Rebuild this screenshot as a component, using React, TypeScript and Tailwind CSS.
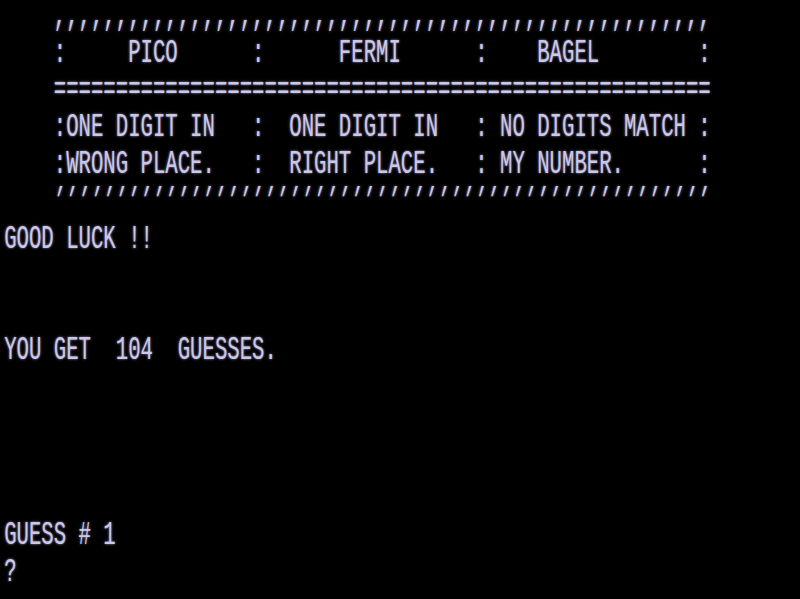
import React from "react";

const rows: string[] = [
    "    " + ",".repeat(53),
    "    :     PICO      :      FERMI      :    BAGEL        :",
    "    " + "=".repeat(53),
    "    :ONE DIGIT IN   :  ONE DIGIT IN   : NO DIGITS MATCH :",
    "    :WRONG PLACE.   :  RIGHT PLACE.   : MY NUMBER.      :",
    "    " + "'".repeat(53),
    "GOOD LUCK !!",
    "",
    "",
    "YOU GET  104  GUESSES.",
    "",
    "",
    "",
    "",
    "GUESS # 1",
    "?",
];

const App = () => {
    return (
        <div
            className="w-[800px] h-[599px] overflow-hidden bg-black pl-[4.2px] text-[#cbc7ea] text-[20.67px] [text-shadow:0_0_2px_rgba(196,192,235,0.8)]"
            style={{ fontFamily: '"Liberation Mono", "DejaVu Sans Mono", monospace' }}
        >
            {rows.map((row, i) => (
                <div key={i} className="h-[37.1px] leading-[37.1px] whitespace-pre">
                    <span
                        className={`inline-block origin-[50%_22.7px] scale-y-[1.6] ${i === 5 ? "skew-x-[-25deg] -translate-x-[5px]" : ""}`}
                    >
                        {row || " "}
                    </span>
                </div>
            ))}
        </div>
    );
};

export default App;
